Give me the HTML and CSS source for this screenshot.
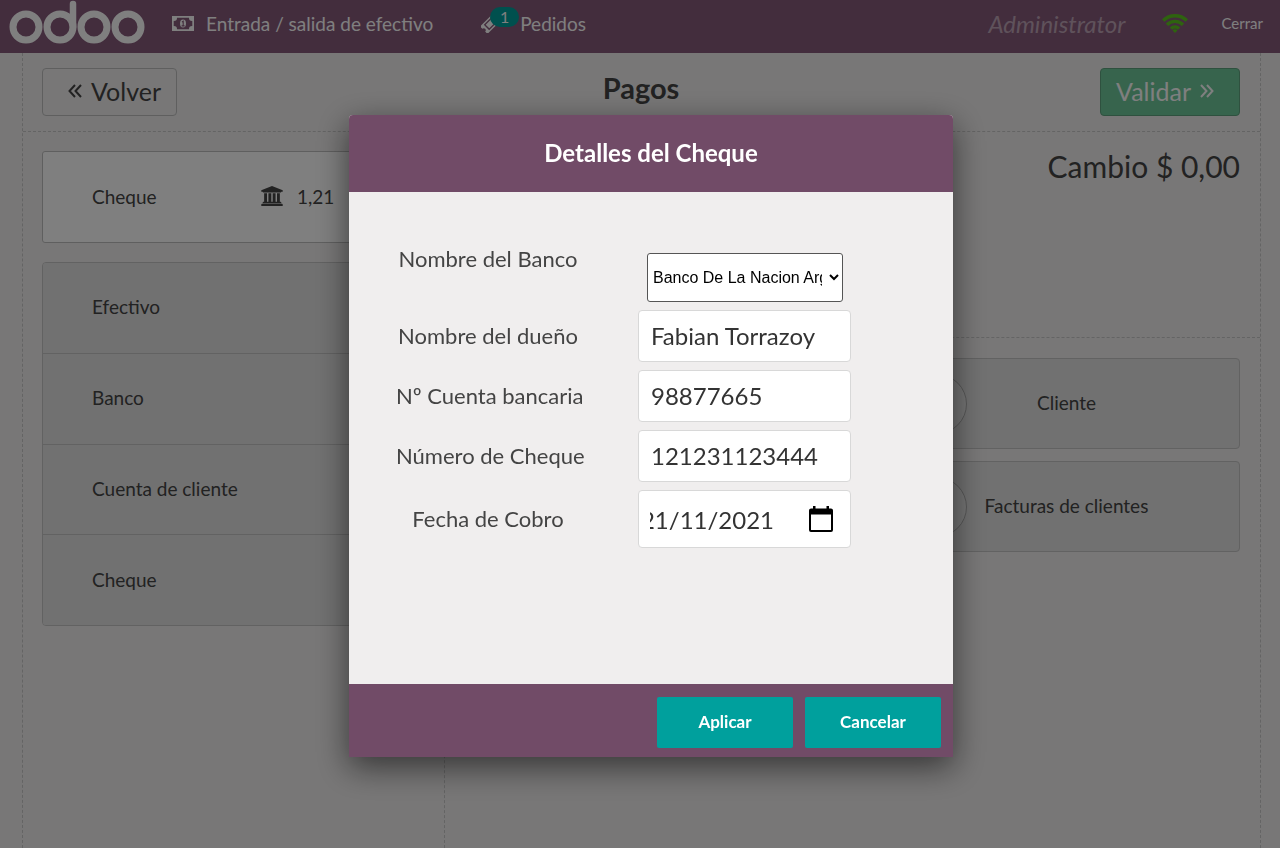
FILE: index.html
```html
<!DOCTYPE html>
<html lang="es">
<head>
<meta charset="utf-8">
<meta name="viewport" content="width=device-width, initial-scale=1">
<title>Pagos</title>
<link rel="stylesheet" href="styles.css">
</head>
<body>
<div class="pos">
  <header class="topbar">
    <svg class="logo" viewBox="0 0 136 46" role="img" aria-label="odoo">
      <g fill="none" stroke="currentColor" stroke-width="7">
        <circle cx="17" cy="27" r="13"/>
        <circle cx="51" cy="27" r="13"/>
        <circle cx="85" cy="27" r="13"/>
        <circle cx="119" cy="27" r="13"/>
        <path d="M64 27V4" stroke-linecap="round" stroke-width="6.500"/>
      </g>
    </svg>
    <button class="nav-item nav-cash" type="button">
      <svg class="icon-money" viewBox="0 0 22 15" fill="none" stroke="currentColor">
        <path fill="currentColor" stroke="none" fill-rule="evenodd" d="M0 0H22V15H0ZM5 1.700A3.200 3.200 0 0 1 1.700 5V10A3.200 3.200 0 0 1 5 13.300H17A3.200 3.200 0 0 1 20.300 10V5A3.200 3.200 0 0 1 17 1.700Z"/>
        <ellipse cx="11" cy="7.500" rx="3" ry="4" fill="currentColor" stroke="none"/>
        <path class="money-digit" d="M10 6L11.200 5.200V9.800M9.600 9.900H12.600" stroke-width="1.100"/>
      </svg>
      <span>Entrada / salida de efectivo</span>
    </button>
    <button class="nav-item nav-orders" type="button">
      <span class="ticket">
        <svg class="icon-ticket" viewBox="0 0 20 20">
          <g transform="rotate(-45 10 10)">
            <path fill="currentColor" fill-rule="evenodd" d="M0 4.500H20V8A2 2 0 0 0 20 12V15.500H0V12A2 2 0 0 0 0 8ZM4 6V14H16V6Z"/>
            <path fill="currentColor" d="M5.500 7.300H14.500V12.700H5.500Z"/>
          </g>
        </svg>
        <span class="badge">1</span>
      </span>
      <span>Pedidos</span>
    </button>
    <span class="user">Administrator</span>
    <svg class="icon-wifi" viewBox="0 0 26 20" fill="none" stroke="currentColor" stroke-width="3.400" role="img" aria-label="Conectado">
      <path d="M1.200 7.500A17 17 0 0 1 24.800 7.500M5 11.700A11.300 11.300 0 0 1 21 11.700M9 15.600A5.700 5.700 0 0 1 17 15.600"/>
      <path fill="currentColor" stroke="none" d="M13 20L10.600 17.400A3.400 3.400 0 0 1 15.400 17.400Z"/>
    </svg>
    <button class="close" type="button">Cerrar</button>
  </header>

  <main class="payment">
    <div class="payment-head">
      <button class="btn back" type="button">
        <svg class="icon-angle" viewBox="0 0 14 14" fill="none" stroke="currentColor" stroke-width="2"><path d="M7 1L1.500 7L7 13M13 1L7.500 7L13 13"/></svg>
        <span>Volver</span>
      </button>
      <h1>Pagos</h1>
      <button class="btn validate" type="button">
        <span>Validar</span>
        <svg class="icon-angle" viewBox="0 0 14 14" fill="none" stroke="currentColor" stroke-width="2"><path d="M1 1L6.500 7L1 13M7 1L12.500 7L7 13"/></svg>
      </button>
    </div>
    <div class="payment-body">
      <section class="methods">
        <div class="line selected">
          <span class="line-name">Cheque</span>
          <svg class="icon-bank" viewBox="0 0 1920 1792" fill="currentColor"><path d="M960 0l960 384v128h-128q0 26-20.500 45t-48.500 19h-1526q-28 0-48.500-19t-20.500-45h-128v-128zM256 640h256v768h128v-768h256v768h128v-768h256v768h128v-768h256v768h59q28 0 48.500 19t20.500 45v64h-1664v-64q0-26 20.500-45t48.500-19h59zM1851 1600q28 0 48.500 19t20.500 45v128h-1920v-128q0-26 20.500-45t48.500-19z"/></svg>
          <span>1,21</span>
        </div>
        <div class="method-list">
          <button class="line" type="button">Efectivo</button>
          <button class="line" type="button">Banco</button>
          <button class="line" type="button">Cuenta de cliente</button>
          <button class="line" type="button">Cheque</button>
        </div>
      </section>
      <section class="summary">
        <div class="change">Cambio $ 0,00</div>
        <div class="actions">
          <button class="action" type="button"><span class="disc"></span><span class="action-name">Cliente</span></button>
          <button class="action" type="button"><span class="disc"></span><span class="action-name">Facturas de clientes</span></button>
        </div>
      </section>
    </div>
  </main>
</div>

<div class="overlay">
  <form class="dialog" role="dialog" aria-labelledby="dialog-title">
    <h2 class="dialog-title" id="dialog-title">Detalles del Cheque</h2>
    <div class="fields">
      <label class="bank-label" for="bank">Nombre del Banco</label>
      <select class="bank" id="bank"><option>Banco De La Nacion Argentina</option></select>
      <label for="owner">Nombre del dueño</label>
      <input class="field" id="owner" type="text" value="Fabian Torrazoy">
      <label for="account">Nº Cuenta bancaria</label>
      <input class="field" id="account" type="text" value="98877665">
      <label for="check">Número de Cheque</label>
      <input class="field" id="check" type="text" value="121231123444">
      <label for="due">Fecha de Cobro</label>
      <div class="field date">
        <input class="date-text" id="due" type="text" value="21/11/2021">
        <button class="date-button" type="button" aria-label="Elegir fecha">
          <svg class="icon-calendar" viewBox="0 0 24 26"><path fill="currentColor" fill-rule="evenodd" d="M4 0H6.500V2.500H17.500V0H20V2.500H22A2 2 0 0 1 24 4.500V24A2 2 0 0 1 22 26H2A2 2 0 0 1 0 24V4.500A2 2 0 0 1 2 2.500H4ZM2 8.500V24H22V8.500Z"/></svg>
        </button>
      </div>
    </div>
    <div class="dialog-foot">
      <button class="dialog-button" type="button">Aplicar</button>
      <button class="dialog-button" type="button">Cancelar</button>
    </div>
  </form>
</div>
</body>
</html>
```
FILE: styles.css
```css
* { box-sizing: border-box; }

body {
  margin: 0;
  font-family: Lato, "Liberation Sans", sans-serif;
  color: #444;
  background: #f0eeee;
}

button {
  font: inherit;
  color: inherit;
  cursor: pointer;
}

.pos {
  display: flex;
  flex-direction: column;
  min-height: 100vh;
  font-size: 19px;
}

/* Top bar */
.topbar {
  display: flex;
  align-items: center;
  height: 53px;
  padding: 0 17px 7px 9px;
  background: #875a7b;
  color: #fff;
}

.logo { width: 136px; height: 46px; color: #fff; }

.nav-item, .close {
  display: flex;
  align-items: center;
  padding: 0;
  border: 0;
  background: none;
}

.nav-cash { gap: 12px; margin-left: 27px; }
.nav-orders { gap: 20px; margin-left: 48px; }
.icon-money { width: 22px; height: 15px; }
.money-digit { stroke: #875a7b; }
.ticket { position: relative; display: flex; }
.icon-ticket { width: 19px; height: 19px; }

.badge {
  position: absolute;
  top: -7px;
  left: 9px;
  width: 29px;
  border-radius: 10px;
  background: #00a09d;
  font-size: 16px;
  line-height: 20px;
}

.user {
  margin-left: auto;
  font-size: 24px;
  font-style: italic;
  color: #bfa5b7;
}

.icon-wifi { width: 26px; height: 20px; margin: 0 33px 0 37px; color: #5dc71e; }
.close { font-size: 15px; }

/* Payment screen */
.payment {
  display: flex;
  flex: 1;
  flex-direction: column;
  margin: 0 19px 0 22px;
  border: dashed #c8c8c8;
  border-width: 0 1px;
}

.payment-head {
  display: grid;
  grid-template-columns: 1fr auto 1fr;
  align-items: center;
  padding: 15px 20px 15px 19px;
  border-bottom: 1px dashed #c8c8c8;
}

h1 { margin: 0; font-size: 29px; line-height: 40px; align-self: start; }

.btn {
  display: flex;
  align-items: center;
  gap: 9px;
  height: 48px;
  padding: 0 15px 2px;
  border: 1px solid #bfbfbf;
  border-radius: 4px;
  background: #f0eeee;
  font-size: 25px;
}

.back { justify-self: start; padding-left: 25px; }
.validate { justify-self: end; padding-right: 25px; border-color: #5fa37e; background: #6ec89b; color: #fff; }
.icon-angle { width: 14px; height: 14px; }

.payment-body { display: flex; flex: 1; }
.methods { flex: 0 0 422px; padding: 19px; border-right: 1px dashed #c8c8c8; }

.line {
  display: flex;
  flex: 1;
  align-items: center;
  width: 100%;
  padding: 0 49px 2px;
  border: 0;
  border-bottom: 1px solid #c4c4c4;
  background: #e2e2e2;
  text-align: left;
}

.line.selected {
  height: 92px;
  margin-bottom: 19px;
  border: 1px solid #bfbfbf;
  border-radius: 3px;
  background: #fff;
}

.line-name { flex: 0 0 169px; }
.icon-bank { width: 22px; height: 20px; margin-right: 14px; }

.method-list {
  display: flex;
  flex-direction: column;
  height: 364px;
  border: 1px solid #c4c4c4;
  border-radius: 4px;
  overflow: hidden;
}
.method-list .line:last-child { border-bottom: 0; }

.summary { display: flex; flex: 1; flex-direction: column; }

.change {
  height: 206px;
  padding: 16px 20px;
  border-bottom: 1px dashed #c8c8c8;
  font-size: 30px;
  text-align: right;
}

.actions { display: flex; flex-direction: column; gap: 12px; padding: 20px; }

.action {
  display: flex;
  align-items: center;
  height: 91px;
  padding: 0;
  border: 1px solid #c4c4c4;
  border-radius: 4px;
  background: #e2e2e2;
}

.disc {
  width: 60px;
  height: 60px;
  margin-left: 441px;
  border: 1px solid #b0b0b0;
  border-radius: 50%;
  background: #eaeaea;
}

.action-name { flex: 1; margin-right: 73px; padding-bottom: 2px; }

/* Dialog */
.overlay {
  position: fixed;
  inset: 0;
  display: flex;
  align-items: center;
  justify-content: center;
  padding: 24px 0 0 22px;
  background: rgba(0, 0, 0, .5);
}

.dialog {
  width: 604px;
  border-radius: 4px 4px 0 0;
  background: #f0eeee;
  box-shadow: 0 10px 32px rgba(0, 0, 0, .55);
}

.dialog-title {
  margin: 0;
  padding-bottom: 2px;
  border-radius: 4px 4px 0 0;
  background: #714b67;
  color: #fff;
  font-size: 24px;
  line-height: 75px;
  text-align: center;
}

.fields {
  display: grid;
  grid-template-columns: 184px 213px;
  align-items: center;
  align-content: start;
  gap: 8px 58px;
  min-height: 492px;
  padding: 61px 47px 0;
  font-size: 22px;
  text-align: center;
  white-space: nowrap;
}

.fields label { padding-bottom: 2px; }
.fields .bank-label { align-self: start; line-height: 12px; }

.bank {
  width: 196px;
  height: 49px;
  margin-left: 9px;
  padding: 0 4px 1px 1px;
  border: 1px solid #555;
  border-radius: 3px;
  background: #fff;
  color: #000;
  font: 16px "Liberation Sans", Arial, sans-serif;
}

.field {
  width: 100%;
  height: 52px;
  padding: 0 12px 2px;
  border: 1px solid #d8d8d8;
  border-radius: 4px;
  background: #fff;
  color: #333;
  font: 24px Lato, "Liberation Sans", sans-serif;
}

.date { display: flex; align-items: center; height: 58px; padding: 0 17px 0 11px; }

/* Right-to-left scrolling keeps the year in view when the date is too wide. */
.date-text {
  width: 124px;
  padding: 0;
  border: 0;
  background: none;
  color: inherit;
  font: inherit;
  direction: rtl;
}

.date-button { display: flex; margin-left: auto; padding: 0; border: 0; background: none; color: #000; }
.icon-calendar { width: 24px; height: 26px; }

.dialog-foot {
  display: flex;
  justify-content: flex-end;
  gap: 12px;
  padding: 13px 12px 9px;
  background: #714b67;
}

.dialog-button {
  width: 136px;
  height: 51px;
  padding: 0 0 2px;
  border: 0;
  border-radius: 2px;
  background: #00a09d;
  color: #fff;
  font-size: 17px;
  font-weight: 700;
}
```
